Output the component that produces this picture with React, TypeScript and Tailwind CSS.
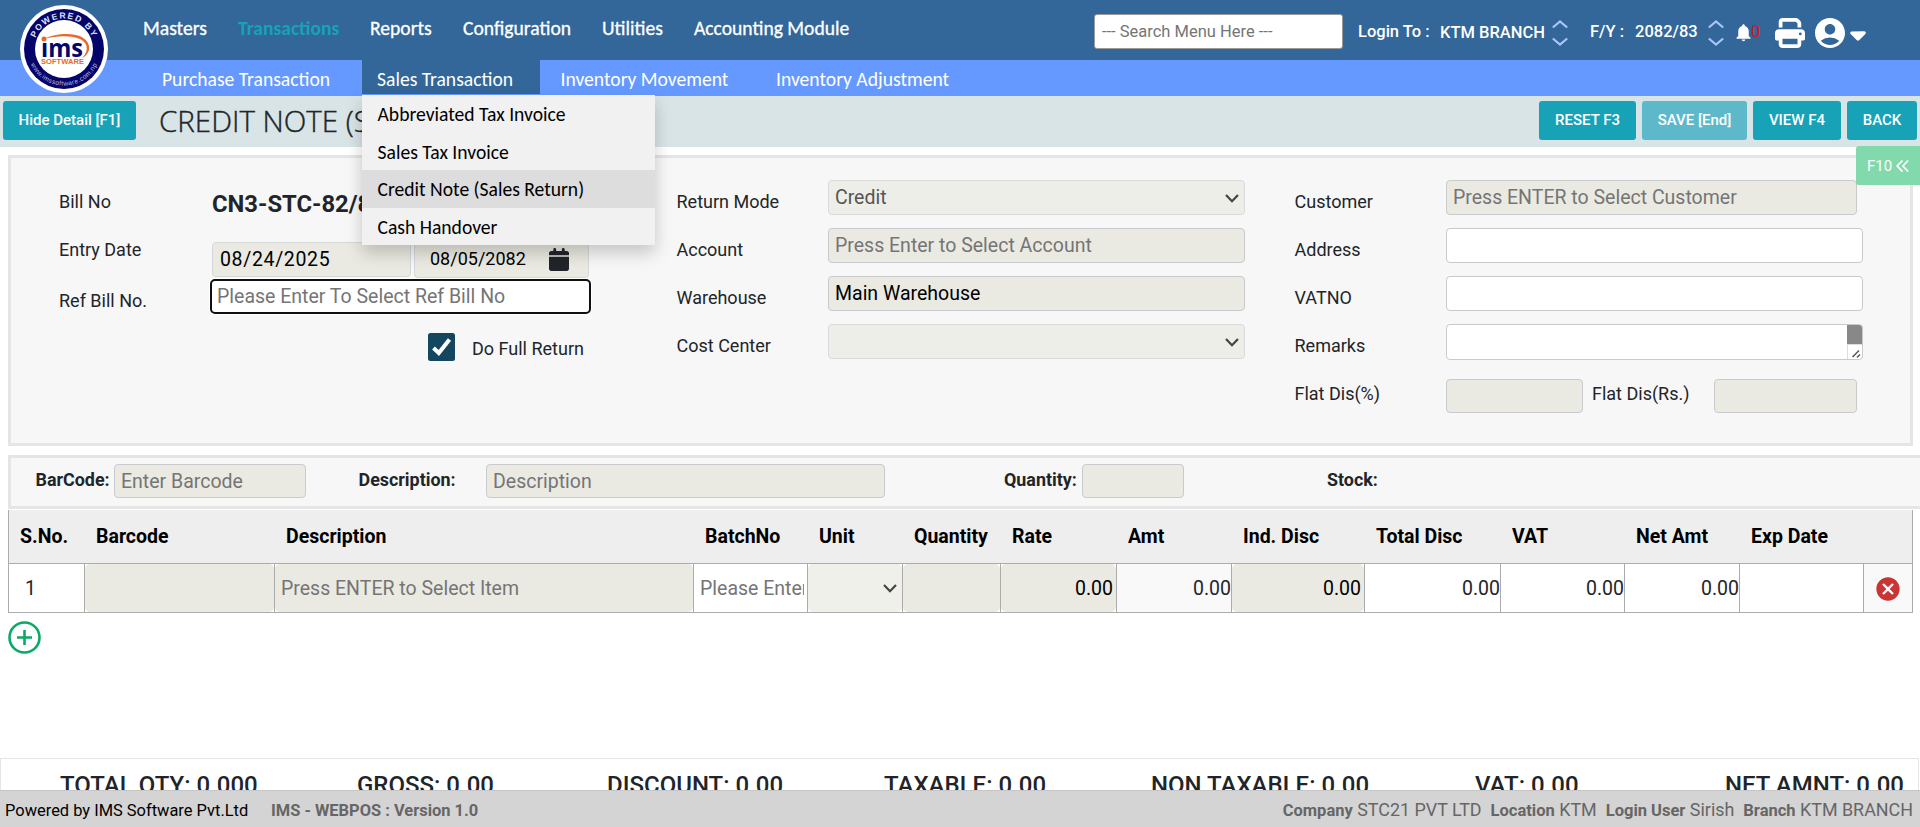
import React from "react";
import { FaCalendar, FaCaretDown, FaPrint } from "react-icons/fa6";
import { MdAccountCircle, MdCancel, MdNotifications } from "react-icons/md";

function Logo() {
  return (
    <svg viewBox="0 0 88 88" className="h-[88px] w-[88px]">
      <defs>
        <path id="arc-top" d="M13.4 44 A30.6 30.6 0 0 1 74.6 44" />
        <path id="arc-bottom" d="M7.4 44 A36.6 36.6 0 0 0 80.6 44" />
      </defs>
      <circle cx="44" cy="44" r="44" fill="#fff" />
      <circle cx="44" cy="44" r="40" fill="#04046b" />
      <circle cx="44" cy="44" r="29" fill="#fff" />
      <text fontFamily="Liberation Sans, sans-serif" fontWeight="700" fontSize="8.6" fill="#dfe3f5" letterSpacing="1.5">
        <textPath href="#arc-top" startOffset="50%" textAnchor="middle">POWERED BY</textPath>
      </text>
      <text fontFamily="Liberation Sans, sans-serif" fontSize="6.6" fill="#b8bce0" letterSpacing="0.4">
        <textPath href="#arc-bottom" startOffset="50%" textAnchor="middle">www.imssoftware.com.np</textPath>
      </text>
      <path d="M24 34 C38 27 66 26 69 41 C70 47 66 51 62 53 C66 49 67.500 45 66.500 41 C63.500 30 40 29.500 24 34Z" fill="#e8692c" />
      <circle cx="24" cy="34" r="2.500" fill="#e8692c" />
      <text x="21" y="52" textLength="42" lengthAdjust="spacingAndGlyphs" fontFamily="Open Sans, sans-serif" fontWeight="700" fontSize="25" fill="#04046b">ıms</text>
      <text x="21" y="58.800" textLength="43" lengthAdjust="spacingAndGlyphs" fontFamily="Liberation Sans, sans-serif" fontWeight="700" fontSize="6.500" fill="#e8692c">SOFTWARE</text>
    </svg>
  );
}

function UpDown() {
  return (
    <svg viewBox="0 0 16 26" className="h-[26px] w-4 shrink-0" fill="none" stroke="#a9c6fb" strokeWidth="2.200">
      <path d="M0.800 7.500 L8 1.500 L15.200 7.500" />
      <path d="M0.800 18.500 L8 24.500 L15.200 18.500" />
    </svg>
  );
}

function Chevron() {
  return (
    <svg viewBox="0 0 14 9" className="h-[9px] w-[14px] shrink-0" fill="none" stroke="#444" strokeWidth="2.200">
      <path d="M1 1 L7 7.200 L13 1" />
    </svg>
  );
}

const btn = "flex h-[39px] items-center justify-center rounded-[3px] text-[15px] font-medium text-white";
const field = "flex items-center rounded border border-[#c9cacb] bg-[#eaeae2] pt-px pl-[6px] text-[19.5px] text-[#757575]";
const select = "flex items-center justify-between rounded border border-[#d9dadb] bg-[#eeeee8] pl-[6px] pr-[5px] pt-px text-[19.5px] text-[#555]";

function Header() {
  return (
    <header className="flex h-[60px] bg-[#336699] text-white">
      <nav className="flex w-[1094px] pt-[8px] pl-[143px] font-[Carlito,Calibri,Lato,sans-serif] text-[19.6px] leading-[40px] font-normal whitespace-nowrap [-webkit-text-stroke:0.3px_currentColor]">
        <a className="w-[95px]">Masters</a>
        <a className="w-[132px] font-bold text-[#17a2b8] [-webkit-text-stroke:0]">Transactions</a>
        <a className="w-[93px]">Reports</a>
        <a className="w-[139px]">Configuration</a>
        <a className="w-[92px]">Utilities</a>
        <a>Accounting Module</a>
      </nav>
      <div className="mt-[14px] flex h-[35px] w-[249px] items-center rounded-[3px] border border-[#999] bg-white pt-[2px] pl-[7px] text-[16.5px] text-[#757575]">
        --- Search Menu Here ---
      </div>
      <div className="flex h-[65px] flex-1 items-center text-[16.5px] font-medium whitespace-nowrap">
        <span className="ml-[15px] w-[82px]">Login To :</span>
        <span className="w-[112px] pt-[2px]">KTM BRANCH</span>
        <UpDown />
        <span className="ml-[22px] w-[45px]">F/Y :</span>
        <span className="w-[73px]">2082/83</span>
        <UpDown />
        <MdNotifications className="ml-[9px] h-[21px] w-[21px] shrink-0" />
        <span className="-ml-[3px] w-[23px] font-normal text-[#e01020]">0</span>
        <FaPrint className="ml-px h-[30px] w-[30px] shrink-0" />
        <MdAccountCircle className="ml-[7px] h-9 w-9 shrink-0" />
        <FaCaretDown className="mt-[3px] h-[25px] w-[20px] shrink-0" />
      </div>
    </header>
  );
}

function SalesMenu() {
  return (
    <div className="absolute top-[35px] left-0 z-20 h-[150px] w-[293px] bg-[#f1f1f1] text-black shadow-[0_8px_16px_0_rgba(0,0,0,0.2)]">
      {["Abbreviated Tax Invoice", "Sales Tax Invoice", "Credit Note (Sales Return)", "Cash Handover"].map((t) => (
        <div key={t} className={`h-[37.5px] pt-px pl-[15.5px] leading-[37px] ${t.startsWith("Credit") ? "bg-[#dddddd]" : ""}`}>
          {t}
        </div>
      ))}
    </div>
  );
}

function SubNav() {
  return (
    <nav className="flex h-9 bg-[#6699ff] font-[Carlito,Calibri,Lato,sans-serif] text-[19.6px] leading-[39px] whitespace-nowrap text-white">
      <a className="w-[362px] pl-[162px]">Purchase Transaction</a>
      <div className="relative h-[34px] w-[178px] bg-[#336699] pl-[15px]">
        Sales Transaction
        <SalesMenu />
      </div>
      <a className="w-[215px] pl-[20.5px]">Inventory Movement</a>
      <a className="pl-[21px]">Inventory Adjustment</a>
    </nav>
  );
}

function TitleBar() {
  return (
    <div className="flex h-[51px] bg-[#d9e4e6] pt-[5px] pl-[3px]">
      <button className={`${btn} w-[133px] bg-[#17a2b8]`}>Hide Detail [F1]</button>
      <h1 className="ml-[23px] w-[260px] overflow-hidden font-['Open_Sans',sans-serif] text-[29.5px] leading-[40px] font-light whitespace-nowrap text-[#212529] [-webkit-text-stroke:0.4px_#212529]">
        CREDIT NOTE (SALES RETURN)
      </h1>
      <div className="ml-auto flex gap-[6px] pr-[3px]">
        <button className={`${btn} w-[97px] bg-[#17a2b8]`}>RESET F3</button>
        <button className={`${btn} w-[105px] bg-[#5db9ca]`}>SAVE [End]</button>
        <button className={`${btn} w-[88px] bg-[#17a2b8]`}>VIEW F4</button>
        <button className={`${btn} w-[70px] bg-[#17a2b8]`}>BACK</button>
      </div>
    </div>
  );
}

function DetailPanel() {
  return (
    <section className="relative mt-2 ml-2 flex h-[291px] w-[1905px] border-[3px] border-[#e5e5e5] bg-[#f7f7f7] text-[18px] leading-6 text-[#212529]">
      <div className="w-[665px] pl-[47px]">
        <div className="flex h-[84px] pt-[32px]">
          <span className="w-[154px] pl-px">Bill No</span>
          <span className="pt-[2px] text-[23.8px] font-bold">CN3-STC-82/83</span>
        </div>
        <div className="flex h-[37px]">
          <span className="w-[154px] -mt-[4px] pl-px">Entry Date</span>
          <div className="flex h-[35px] w-[199px] items-center rounded border border-[#d5d8d8] bg-[#eaeae2] pt-px pl-[7px] text-[19.5px] tracking-[0.65px] text-black">08/24/2025</div>
          <div className="ml-[3px] flex h-[36px] w-[175px] items-center rounded border border-[#d5d8d8] bg-[#eaeae2] pb-[2px] pl-[15px] text-black">
            <span className="w-[119px]">08/05/2082</span>
            <FaCalendar className="h-[23px] w-[20px] text-[#212529]" />
          </div>
        </div>
        <div className="flex">
          <span className="w-[152px] pt-[10px] pl-px">Ref Bill No.</span>
          <div className="flex h-[35px] w-[381px] items-center rounded-[5px] border-[2.5px] border-[#101010] bg-white pt-px pl-[5px] text-[19.5px] text-[#757575] shadow-[0_0_0_1px_#fff]">
            Please Enter To Select Ref Bill No
          </div>
        </div>
        <div className="mt-[19px] ml-[370px] flex items-center">
          <svg viewBox="0 0 27 28" className="h-[28px] w-[27px]">
            <rect width="27" height="28" rx="2.500" fill="#14465f" />
            <path d="M5.500 15 L10.800 20 L21.500 6.500" fill="none" stroke="#fff" strokeWidth="4" />
          </svg>
          <span className="ml-[17px] pt-[3px]">Do Full Return</span>
        </div>
      </div>

      <div className="flex w-[618px] flex-col gap-[13px] pt-[22px]">
        <div className="flex"><span className="w-[152px] pt-[10px] pl-[0.5px]">Return Mode</span><div className={`${select} h-[35px] w-[417px]`}>Credit<Chevron /></div></div>
        <div className="flex"><span className="w-[152px] pt-[10px] pl-[0.5px]">Account</span><div className={`${field} h-[35px] w-[417px]`}>Press Enter to Select Account</div></div>
        <div className="flex"><span className="w-[152px] pt-[10px] pl-[0.5px]">Warehouse</span><div className={`${field} h-[35px] w-[417px]`}><span className="text-black">Main Warehouse</span></div></div>
        <div className="flex"><span className="w-[152px] pt-[10px] pl-[0.5px]">Cost Center</span><div className={`${select} h-[35px] w-[417px]`}><span /><Chevron /></div></div>
      </div>

      <div className="flex flex-col gap-[13px] pt-[22px]">
        <div className="flex"><span className="w-[152px] pt-[10px] pl-[0.5px]">Customer</span><div className={`${field} h-[35px] w-[411px]`}>Press ENTER to Select Customer</div></div>
        <div className="flex"><span className="w-[152px] pt-[10px] pl-[0.5px]">Address</span><div className="h-[35px] w-[417px] rounded border border-[#c9cacb] bg-white" /></div>
        <div className="flex"><span className="w-[152px] pt-[10px] pl-[0.5px]">VATNO</span><div className="h-[35px] w-[417px] rounded border border-[#c9cacb] bg-white" /></div>
        <div className="flex">
          <span className="w-[152px] pt-[10px] pl-[0.5px]">Remarks</span>
          <div className="flex h-[36px] w-[417px] justify-end overflow-hidden rounded border border-[#c9cacb] bg-white">
            <div className="flex w-[15px] flex-col">
              <div className="h-[19px] bg-[#888]" />
              <svg viewBox="0 0 15 15" className="h-[15px] w-[15px]" fill="none" stroke="#555" strokeWidth="1.500">
                <path d="M0 0.500 H15 M0.500 0 V15" stroke="#ddd" strokeWidth="1" />
                <path d="M5.500 13 L12 6.500 M10 13.500 L13 10.500" />
              </svg>
            </div>
          </div>
        </div>
        <div className="mt-[6px] flex">
          <span className="w-[152px] pt-[3px] pl-[0.5px]">Flat Dis(%)</span>
          <div className={`${field} h-[34px] w-[137px]`} />
          <span className="ml-[9px] w-[122px] pt-[3px]">Flat Dis(Rs.)</span>
          <div className={`${field} h-[34px] w-[143px]`} />
        </div>
      </div>

      <div className="absolute -top-[12px] left-[1845px] flex h-[39px] w-[64px] items-center rounded-l-[3px] bg-[#82d9ab] pl-[11px] text-[15px] text-white">
        F10
        <svg viewBox="0 0 13 12" className="ml-[4px] h-3 w-[13px]" fill="none" stroke="#fff" strokeWidth="1.800">
          <path d="M6.500 0.500 L1.200 6 L6.500 11.500 M12.200 0.500 L6.900 6 L12.200 11.500" />
        </svg>
      </div>
    </section>
  );
}

function ScanBar() {
  return (
    <section className="mt-[9px] ml-2 flex h-[54px] border-y-[3px] border-l-[3px] border-[#e5e5e5] bg-[#f7f7f7] pt-[6px] text-[17.900px] leading-[31px] font-bold text-[#212529]">
      <span className="ml-[24.5px] w-[78.5px]">BarCode:</span>
      <div className={`${field} h-[34px] w-[192px] font-normal`}>Enter Barcode</div>
      <span className="ml-[52.5px] w-[127.5px]">Description:</span>
      <div className={`${field} h-[34px] w-[399px] font-normal`}>Description</div>
      <span className="ml-[119px] w-[78px]">Quantity:</span>
      <div className={`${field} h-[34px] w-[102px]`} />
      <span className="ml-[143px]">Stock:</span>
    </section>
  );
}

const grid = "grid grid-cols-[76px_190px_419px_114px_95px_98px_116px_115px_133px_136px_124px_115px_124px_49px]";
const cell = "flex items-center border-r border-[#acacac]";
const off = "h-full w-full rounded-[5px] bg-[#eaeae2] flex items-center pt-px";

function ItemTable() {
  const heads = ["S.No.", "Barcode", "Description", "BatchNo", "Unit", "Quantity", "Rate", "Amt", "Ind. Disc", "Total Disc", "VAT", "Net Amt", "Exp Date", ""];
  return (
    <section className="mt-px ml-2 w-[1905px] text-[19.5px] whitespace-nowrap">
      <div className={`${grid} h-[54px] items-center border-x border-b border-[#acacac] bg-[#eeeeee] pt-px font-bold text-black`}>
        {heads.map((h, i) => (
          <span key={i} className="w-0 pl-[11px]">{h}</span>
        ))}
      </div>
      <div className={`${grid} h-[49px] border-b border-l border-[#acacac] text-[#212529]`}>
        <div className={`${cell} pt-px pl-[16px]`}>1</div>
        <div className={cell}><div className={off} /></div>
        <div className={cell}><div className={`${off} pl-[6px] text-[#757575]`}>Press ENTER to Select Item</div></div>
        <div className={`${cell} pt-px pr-[3px] pl-[6px]`}><span className="overflow-hidden text-[#757575]">Please Enter</span></div>
        <div className={cell}><div className="flex h-full w-full items-center justify-end rounded-[5px] bg-[#eff0ea] pr-[5px]"><Chevron /></div></div>
        <div className={cell}><div className={off} /></div>
        <div className={cell}><div className={`${off} justify-end pr-[3px] text-black`}>0.00</div></div>
        <div className={`${cell} justify-end bg-[#f9f9f9] pt-px`}>0.00</div>
        <div className={cell}><div className={`${off} justify-end pr-[3px] text-black`}>0.00</div></div>
        <div className={`${cell} justify-end pt-px`}>0.00</div>
        <div className={`${cell} justify-end pt-px`}>0.00</div>
        <div className={`${cell} justify-end pt-px`}>0.00</div>
        <div className={cell} />
        <div className={`${cell} justify-center bg-[#f9f9f9] pt-[2px]`}><MdCancel className="h-7 w-7 text-[#c93434]" /></div>
      </div>
      <svg viewBox="0 0 33 33" className="mt-2 h-[33px] w-[33px]" fill="none" stroke="#0aa968" strokeWidth="2.600">
        <circle cx="16.500" cy="16.500" r="15" />
        <path d="M9 16.500 H24 M16.500 9 V24" />
      </svg>
    </section>
  );
}

function Totals() {
  return (
    <section className="flex h-[32px] w-[1919px] overflow-hidden border-x border-t border-[#e5e5e5] pt-[12px] pl-[59px] text-[24px] leading-[28px] font-medium whitespace-nowrap text-[#212529]">
      <span className="w-[297px]">TOTAL QTY: 0.000</span>
      <span className="w-[250px]">GROSS: 0.00</span>
      <span className="w-[277px]">DISCOUNT: 0.00</span>
      <span className="w-[267px]">TAXABLE: 0.00</span>
      <span className="w-[324px]">NON TAXABLE: 0.00</span>
      <span className="w-[250px]">VAT: 0.00</span>
      <span>NET AMNT: 0.00</span>
    </section>
  );
}

function Footer() {
  return (
    <footer className="flex h-[37px] items-center border-t border-[#c6c6c6] bg-[#d4d4d4] pt-[5px] pl-[5px] text-[16.45px] whitespace-nowrap text-[#666]">
      <span className="w-[266px] text-black">Powered by IMS Software Pvt.Ltd</span>
      <b className="flex-1">IMS - WEBPOS : Version 1.0</b>
      <div className="flex gap-[9px] pr-[7px] pb-[3px] text-[17.9px]">
        <span><b className="text-[16.5px]">Company</b> STC21 PVT LTD</span>
        <span><b className="text-[16.5px]">Location</b> KTM</span>
        <span><b className="text-[16.5px]">Login User</b> Sirish</span>
        <span><b className="text-[16.5px]">Branch</b> KTM BRANCH</span>
      </div>
    </footer>
  );
}

export default function App() {
  return (
    <div className="relative flex h-[827px] w-full flex-col overflow-hidden bg-white font-[Roboto,sans-serif]">
      <Header />
      <SubNav />
      <TitleBar />
      <DetailPanel />
      <ScanBar />
      <ItemTable />
      <div className="flex-1" />
      <Totals />
      <Footer />
      <div className="absolute top-[5px] left-5"><Logo /></div>
    </div>
  );
}
